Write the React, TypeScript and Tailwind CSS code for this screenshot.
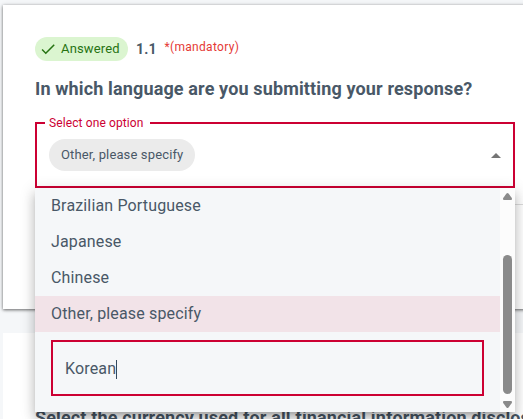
import { useState } from "react";

const languages = ["Brazilian Portuguese", "Japanese", "Chinese", "Other, please specify"];

export default function App() {
  const [selected, setSelected] = useState("Other, please specify");

  return (
    <div className="h-[419px] w-[523px] overflow-hidden bg-[#f5f7f9] pt-[5px] pl-[3px] font-[Roboto,sans-serif] text-[#495867]">
      <section className="h-[304px] w-[560px] bg-white pt-8 pl-8 shadow-[0_1px_3px_rgba(0,0,0,0.55),0_0_5px_rgba(0,0,0,0.1)]">
        <QuestionHeader />
        <h2 className="mt-4 text-[18px] leading-6 font-bold tracking-[0.14px] whitespace-nowrap">
          In which language are you submitting your response?
        </h2>

        <div className="relative mt-[21px] w-[480px]">
          <SelectField value={selected} />
          <LanguageMenu selected={selected} onSelect={setSelected} />
        </div>

        {/* Divider under the answer */}
        <div className="mt-4 h-px w-[500px] bg-[#dcdcdc]" />
      </section>

      <section className="mt-6 h-[200px] w-[560px] bg-white pt-[73px] pl-8">
        <h2 className="text-[18px] leading-6 font-bold tracking-[0.14px] whitespace-nowrap">
          Select the currency used for all financial information disclosed
        </h2>
      </section>
    </div>
  );
}

function QuestionHeader() {
  return (
    <div className="flex h-6 items-center">
      <span className="flex h-6 w-[93px] items-center rounded-full bg-[#dbf5d0] pl-1 text-[13px] text-[#267312]">
        <svg viewBox="0 0 24 24" className="mr-1 size-[18px] fill-current">
          <path d="M9 16.17 4.83 12l-1.42 1.41L9 19 21 7l-1.41-1.41z" />
        </svg>
        <span className="tracking-[0.15px]">Answered</span>
      </span>
      <span className="ml-2 text-[14px] font-bold tracking-[0.15px]">1.1</span>
      <span className="ml-2 -mt-1 text-[12px] tracking-[0.3px] text-[#e53935]">*(mandatory)</span>
    </div>
  );
}

function SelectField({ value }: { value: string }) {
  return (
    <div className="relative flex h-[66px] items-center justify-between border-2 border-[#cc0033] pr-3 pl-3">
      <span className="absolute -top-[9px] left-2 bg-white pr-[6px] pl-1 text-[12px] leading-4 tracking-[0.11px] text-[#cc0033]">
        Select one option
      </span>
      <span className="flex h-8 items-center rounded-full bg-[#ebebeb] px-3 text-[13px] tracking-[0.14px]">{value}</span>
      <svg viewBox="0 0 10 5" className="h-[5px] w-[10px] fill-[#757575]">
        <path d="M0 5 5 0l5 5z" />
      </svg>
    </div>
  );
}

type MenuProps = {
  selected: string;
  onSelect: (value: string) => void;
};

function LanguageMenu({ selected, onSelect }: MenuProps) {
  return (
    <div className="absolute top-[66px] left-0 z-10 w-[480px] shadow-[0_5px_5px_-3px_rgba(0,0,0,0.2),0_8px_10px_1px_rgba(0,0,0,0.14),0_3px_14px_2px_rgba(0,0,0,0.12)]">
      <div className="flex h-[224px] bg-[#f5f7f9]">
        <div className="w-[465px] text-[16px] tracking-[0.15px]">
          <ul>
            {languages.map((language) => (
              <li
                key={language}
                onClick={() => onSelect(language)}
                className={`flex h-9 items-center pl-4 ${language === selected ? "bg-[#f2e3e8]" : ""}`}
              >
                {language}
              </li>
            ))}
          </ul>
          <div className="mt-2 ml-4 flex h-14 w-[433px] items-center border-2 border-[#cc0033] pt-[2px] pl-3">
            Korean
            <span className="h-[19px] w-px bg-[#34495e]" />
          </div>
        </div>
        <Scrollbar />
      </div>
    </div>
  );
}

function Scrollbar() {
  return (
    <div className="flex w-[15px] flex-col items-center bg-[#fcfcfc] pt-[5px]">
      <svg viewBox="0 0 9 7" className="h-[7px] w-[9px] fill-[#8b8b8b]">
        <path d="M3.5.6Q4.5-.6 5.5.6L8.8 5Q9.4 7 8 7H1Q-.4 7 .2 5z" />
      </svg>
      <div className="mt-[55px] h-[139px] w-[9px] rounded-full bg-[#8b8b8b]" />
      <svg viewBox="0 0 9 7" className="mt-[7px] h-[7px] w-[9px] fill-[#8b8b8b]">
        <path d="M3.5 6.4Q4.5 7.6 5.5 6.4L8.8 2Q9.4 0 8 0H1Q-.4 0 .2 2z" />
      </svg>
    </div>
  );
}
